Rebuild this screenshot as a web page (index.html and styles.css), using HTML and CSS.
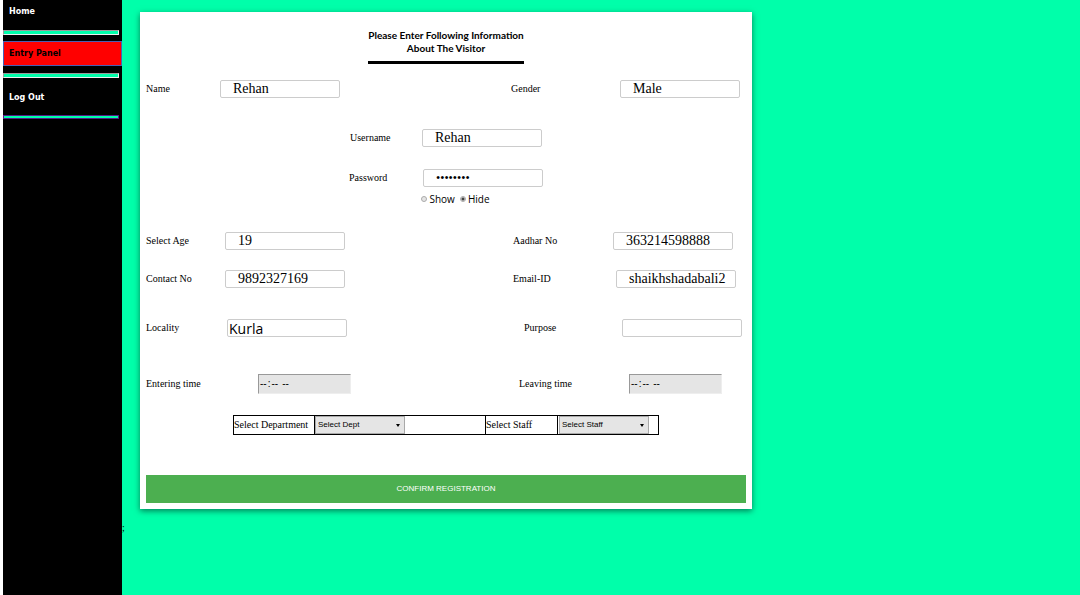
FILE: index.html
```html
<!DOCTYPE html>
<html lang="en-US">
<head>
<meta charset="utf-8">
<title>Visitor Entry Panel</title>
<link rel="stylesheet" href="styles.css">
</head>
<body>
<div class="page">
  <nav class="sidebar">
    <a class="nav-link home" href="#">Home</a>
    <hr class="rule">
    <a class="nav-link active" href="#">Entry Panel</a>
    <hr class="rule">
    <a class="nav-link logout" href="#">Log Out</a>
    <hr class="rule last">
  </nav>
  <main class="content">
    <form class="card">
      <h1 class="title">Please Enter Following Information<br>About The Visitor</h1>
      <div class="row row-name">
        <label for="name">Name</label>
        <input class="field" id="name" type="text" value="Rehan">
        <label for="gender">Gender</label>
        <input class="field" id="gender" type="text" value="Male">
      </div>
      <div class="row row-user">
        <label for="user">Username</label>
        <input class="field" id="user" type="text" value="Rehan">
      </div>
      <div class="row row-pass">
        <label for="pass">Password</label>
        <input class="field secret" id="pass" type="password" value="rehan123">
      </div>
      <div class="toggle">
        <label class="option"><input class="radio" type="radio" name="visible">Show</label>
        <label class="option"><input class="radio" type="radio" name="visible" checked>Hide</label>
      </div>
      <div class="row row-age">
        <label for="age">Select Age</label>
        <input class="field" id="age" type="text" value="19">
        <label for="aadhar">Aadhar No</label>
        <input class="field" id="aadhar" type="text" value="363214598888">
      </div>
      <div class="row row-contact">
        <label for="contact">Contact No</label>
        <input class="field" id="contact" type="text" value="9892327169">
        <label for="email">Email-ID</label>
        <input class="field" id="email" type="text" value="shaikhshadabali2">
      </div>
      <div class="row row-locality">
        <label for="locality">Locality</label>
        <input class="field casual" id="locality" type="text" value="Kurla">
        <label for="purpose">Purpose</label>
        <input class="field" id="purpose" type="text">
      </div>
      <div class="row row-time">
        <label for="enter">Entering time</label>
        <input class="time" id="enter" type="time">
        <label for="leave">Leaving time</label>
        <input class="time" id="leave" type="time">
      </div>
      <table class="staff">
        <tr>
          <td class="caption-dept"><label for="dept">Select Department</label></td>
          <td class="cell-dept"><span class="picker"><select id="dept"><option>Select Dept</option></select></span></td>
          <td class="caption-staff"><label for="staff">Select Staff</label></td>
          <td class="cell-staff"><span class="picker"><select id="staff"><option>Select Staff</option></select></span></td>
        </tr>
      </table>
      <button class="confirm" type="submit">CONFIRM REGISTRATION</button>
    </form>
    <div class="tail">;</div>
  </main>
</div>
</body>
</html>
```
FILE: styles.css
```css
* { box-sizing: border-box; }

body {
  margin: 0;
  background: #00ffaa;
  color: #000;
  font: 10px/12px "Liberation Serif", serif;
}

.page { display: flex; min-height: 100vh; }

/* Navigation */
.sidebar {
  flex: 0 0 122px;
  border-left: 3px solid #fff;
  background: #000;
}

.nav-link {
  display: block;
  padding: 6px;
  color: #fff;
  font: 700 8px/12px "DejaVu Sans", sans-serif;
  text-decoration: none;
}

.home { padding-bottom: 12px; }

.active {
  margin: 6px 0 7px;
  border: 1px solid #4a5fb4;
  padding: 6px 5px 5px;
  background: #f00;
  color: #000;
}

.logout { padding: 14px 6px 11px; }

.rule {
  width: 116px;
  height: 5px;
  margin: 0;
  border: 1px solid;
  border-color: #9a9a9a #eee #eee #9a9a9a;
  background: #00ffaa;
}

.last {
  height: 4px;
  border-color: #551a8b;
}

/* Form card */
.content { flex: 1; min-width: 0; }

.card {
  max-width: 612px;
  margin: 12px 18px 0;
  padding: 17px 6px 6px;
  background: #fff;
  box-shadow: 0 2px 6px rgba(0, 0, 0, 0.5);
}

.title {
  width: fit-content;
  margin: 0 auto 16px;
  padding-bottom: 6px;
  border-bottom: 3px solid #000;
  font: 700 10px/13px Lato, sans-serif;
  text-align: center;
}

.row {
  display: grid;
  align-items: center;
}

.row-name { grid-template-columns: 74px 1fr 109px 126px; }
.row-user { grid-template-columns: 72px 120px; justify-content: center; margin-top: 31px; }
.row-pass { grid-template-columns: 74px 120px; justify-content: center; margin-top: 22px; }
.row-age { grid-template-columns: 79px 1fr 100px 133px; margin-top: 26px; }
.row-contact { grid-template-columns: 79px 1fr 103px 130px; margin-top: 20px; }
.row-locality { grid-template-columns: 81px 1fr 98px 124px; margin-top: 31px; }
.row-time { grid-template-columns: 112px 1fr 110px 117px; margin-top: 37px; }

.field {
  width: 120px;
  height: 18px;
  border: 1px solid #ccc;
  border-radius: 2px;
  padding: 0 0 0 12px;
  background: #fff;
  color: #000;
  font: 14px/16px "Liberation Serif", serif;
}

.secret { font-size: 12px; }
.casual { padding-left: 1px; font-family: "Open Sans", sans-serif; }

.toggle {
  display: flex;
  justify-content: center;
  gap: 5px;
  margin-top: 5px;
  padding-left: 19px;
  font: 10px/14px "Open Sans", sans-serif;
}

.option { display: flex; align-items: center; gap: 2px; }

.radio {
  appearance: none;
  width: 6px;
  height: 6px;
  margin: 0;
  border: 1px solid #aaa;
  border-radius: 50%;
  background: #e5e5e5;
}

.radio:checked { background: radial-gradient(circle, #444 0 1px, #ddd 2px); }

.time {
  width: 93px;
  height: 20px;
  border: 1px solid;
  border-color: #999 #eee #eee #999;
  padding: 0;
  background: #e5e5e5;
  font: 10px/16px "Liberation Sans", sans-serif;
}

.time::-webkit-calendar-picker-indicator { display: none; }

/* Department and staff pickers */
.staff {
  width: 426px;
  max-width: 100%;
  margin: 21px auto 40px;
  border-collapse: collapse;
  table-layout: fixed;
}

.staff td {
  height: 19px;
  border: 1px solid #000;
  padding: 0;
}

.caption-dept { width: 81px; }
.cell-dept { width: 171px; }
.caption-staff { width: 72px; }
.staff .cell-staff { padding-left: 1px; }

.picker { display: block; position: relative; width: 90px; }

.picker::after {
  content: "";
  position: absolute;
  top: 8px;
  right: 5px;
  border: 2px solid transparent;
  border-top: 3px solid #000;
  border-bottom: 0;
}

.picker select {
  display: block;
  appearance: none;
  width: 100%;
  height: 18px;
  border: 1px solid #a9a9a9;
  border-radius: 0;
  padding: 0 2px;
  background: #e5e5e5;
  color: #000;
  font: 8px/16px "Liberation Sans", sans-serif;
}

.confirm {
  display: block;
  width: 100%;
  height: 28px;
  border: 0;
  background: #4caf50;
  color: #fff;
  font: 8px/12px "Liberation Sans", sans-serif;
}

.tail { margin-top: 13px; }
```
